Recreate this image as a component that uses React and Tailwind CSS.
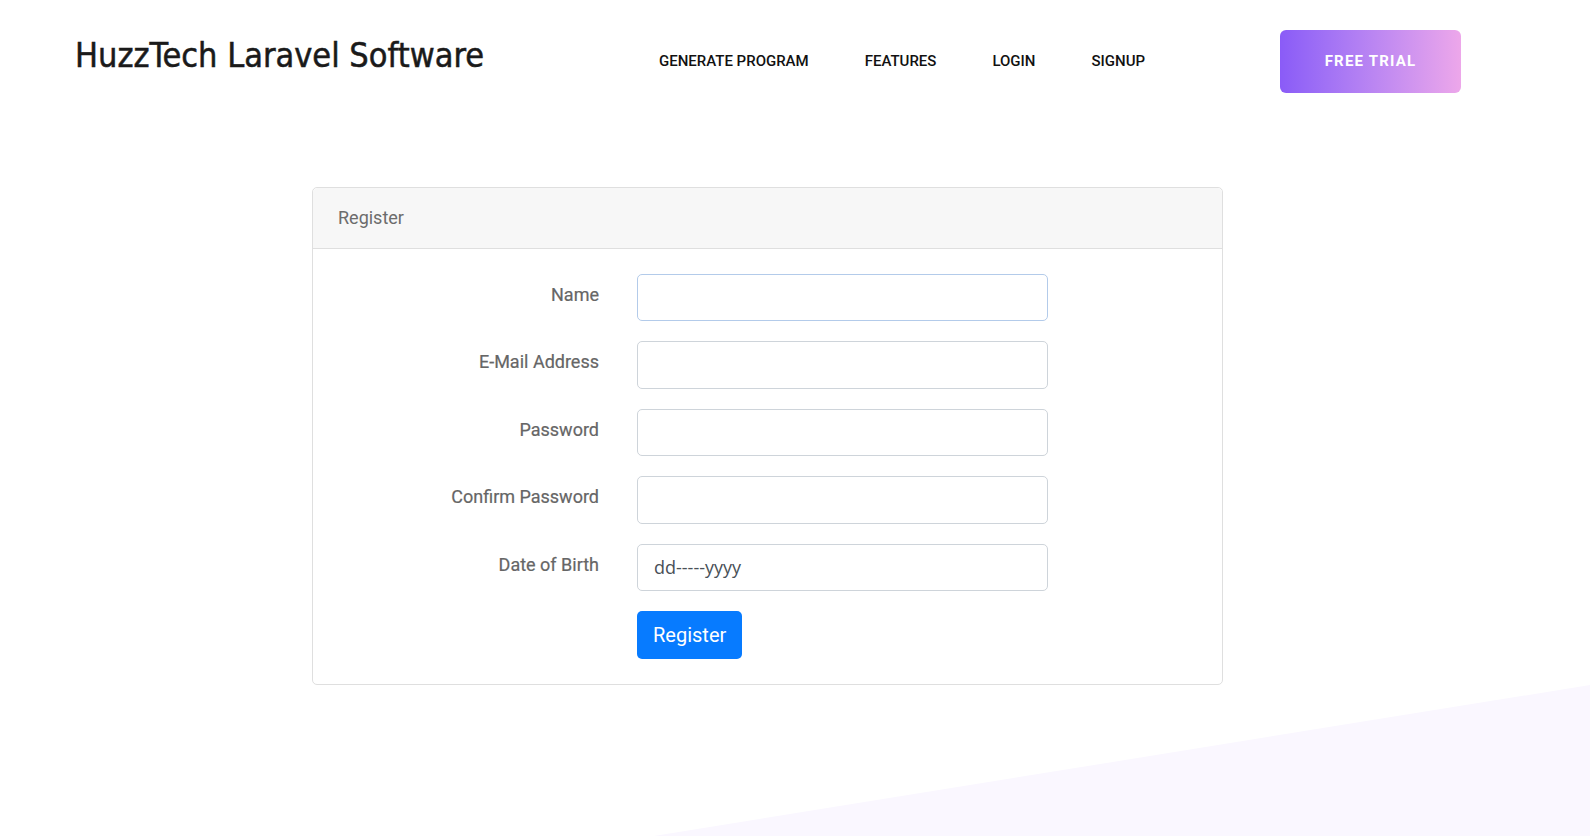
import React from 'react';

const fields = [
    { label: 'Name', focus: true },
    { label: 'E-Mail Address' },
    { label: 'Password' },
    { label: 'Confirm Password' },
    { label: 'Date of Birth', value: 'dd-----yyyy' },
];

const navLinks = ['GENERATE PROGRAM', 'FEATURES', 'LOGIN', 'SIGNUP'];

const App = () => {
    return (
        <div className="relative h-[836px] w-full overflow-hidden bg-white font-['Roboto',sans-serif]">
            {/* decorative background slope */}
            <svg className="absolute bottom-0 left-0 w-[1590px] h-[836px] pointer-events-none" viewBox="0 0 1590 836">
                <polygon points="654,836 1590,685 1590,836" fill="#faf7ff" />
            </svg>

            <div className="relative">
                {/* Header */}
                <header className="flex items-center h-[62px] mt-[30px] pl-[75px] pr-[129px]">
                    <div className="w-[584px] -mt-[12px]">
                        <span className="text-[34px] leading-[40px] text-[#1a1a1a] [-webkit-text-stroke:0.5px_#1a1a1a] font-['DejaVu_Sans_Condensed','DejaVu_Sans',sans-serif]">
                            HuzzTech Laravel Software
                        </span>
                    </div>
                    <nav className="flex items-center gap-[56px]">
                        {navLinks.map(link => (
                            <a key={link} className="text-[15px] font-medium text-[#111]">{link}</a>
                        ))}
                    </nav>
                    <button className="ml-auto w-[181px] h-[63px] rounded-[6px] bg-gradient-to-r from-[#8a5bf7] to-[#eda7ea] text-white text-[15px] font-bold tracking-[1.2px] pt-[1px]">
                        FREE TRIAL
                    </button>
                </header>

                {/* Register card */}
                <div className="ml-[312px] mt-[95px] w-[911px] border border-[#dfdfdf] rounded-[5px] bg-white">
                    <div className="bg-[#f7f7f7] border-b border-[#dfdfdf] px-[25px] py-[15.5px] text-[18px] leading-[28.8px] text-[#6c6c6c] rounded-t-[5px]">
                        Register
                    </div>
                    <div className="p-[25px] flex flex-col gap-[20px]">
                        {fields.map(f => (
                            <div key={f.label} className="flex">
                                <label className="w-[261px] text-right pt-[7px] text-[18px] leading-[28.8px] text-[#666] [-webkit-text-stroke:0.2px_#666]">
                                    {f.label}
                                </label>
                                <div
                                    className={`ml-[38px] w-[411px] h-[47.5px] rounded-[5px] border flex items-center px-[16px] text-[18px] text-[#495057] font-['Open_Sans',sans-serif] ${f.focus ? 'border-[#b3cbea]' : 'border-[#ced4da]'}`}
                                >
                                    {f.value}
                                </div>
                            </div>
                        ))}
                        <div className="flex">
                            <button className="ml-[299px] h-[47.5px] px-[16px] rounded-[5px] bg-[#077bff] text-white text-[20px]">
                                Register
                            </button>
                        </div>
                    </div>
                </div>
            </div>
        </div>
    );
};

export default App;
